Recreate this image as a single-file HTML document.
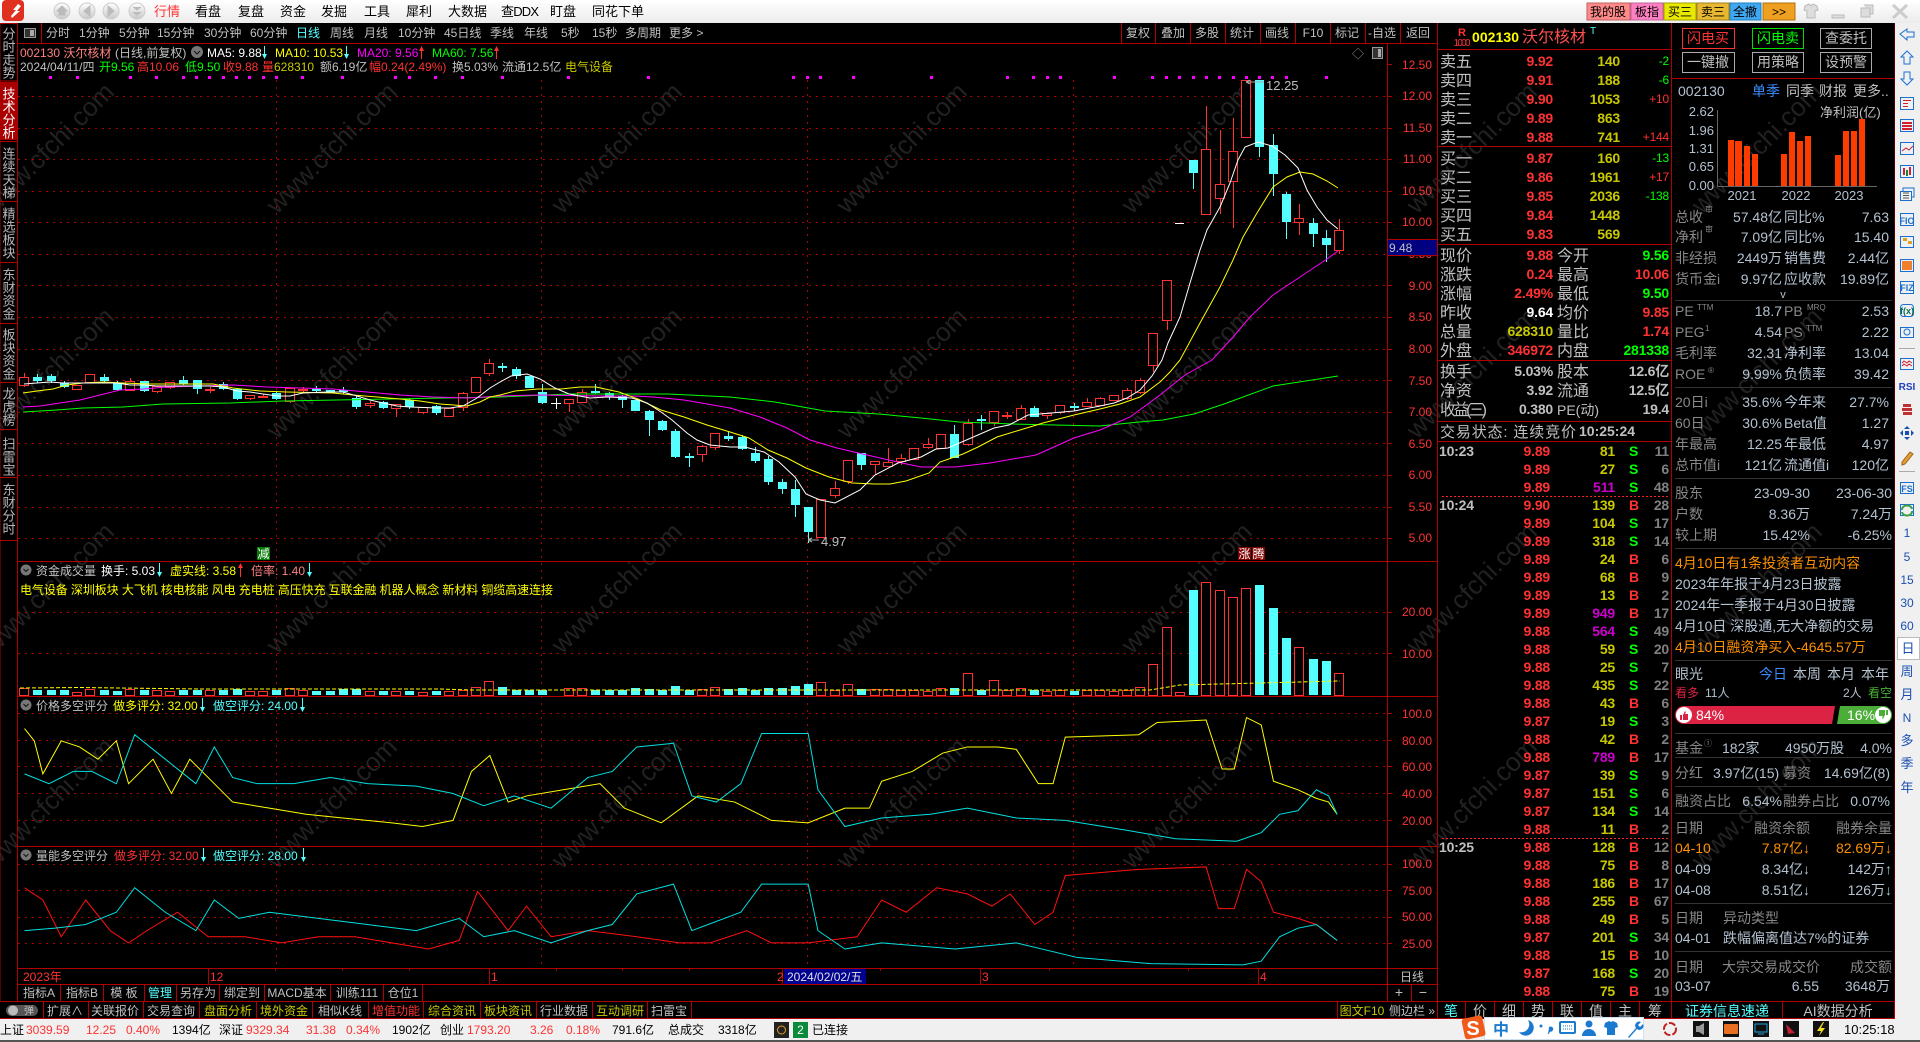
<!DOCTYPE html>
<html><head><meta charset="utf-8"><title>沃尔核材</title>
<style>
html,body{margin:0;padding:0;background:#000;width:1920px;height:1042px;overflow:hidden}
svg{display:block;position:absolute;left:0;top:0}
text{font-family:"Liberation Sans","Noto Sans CJK SC",sans-serif;font-size:12px;fill:#c0c0c0;white-space:pre}
.e{text-anchor:end}.m{text-anchor:middle}
.r{fill:#ff3232}.y{fill:#ffff00}.o{fill:#c8c800}.c{fill:#55ffff}.g{fill:#00ff00}.w{fill:#fff}.k{fill:#000}.p{fill:#ff00ff}.q{fill:#ff8080}.n{fill:#ff9000}
.b{fill:#3c8cff}.d{fill:#888}.v{fill:#b4c2d0}.u{fill:#cc00cc}.a{fill:#808080}
.f13{font-size:13px}.f14{font-size:14px}.f15{font-size:15px}.f16{font-size:16px}
.bd{font-weight:700}
.t text{font-size:14px;font-weight:700;letter-spacing:-.2px}
.z text{font-size:14px}
.wm text{font-size:26px;fill:#212121}
.vt{writing-mode:vertical-rl;font-size:13px;fill:#b8b8b8}
</style></head><body>
<svg width="1920" height="1042" viewBox="0 0 1920 1042" xmlns="http://www.w3.org/2000/svg">
<defs><linearGradient id="tb" x1="0" y1="0" x2="0" y2="1"><stop offset="0" stop-color="#fff"/><stop offset="1" stop-color="#ececec"/></linearGradient>
<linearGradient id="cb" x1="0" y1="0" x2="0" y2="1"><stop offset="0" stop-color="#fff"/><stop offset="1" stop-color="#c8c8c8"/></linearGradient></defs>
<rect width="1920" height="1042" fill="#000"/>

<!-- watermark -->
<g class="wm">
<text transform="translate(-6 215) rotate(-45)">www.cfchi.com</text><text transform="translate(277 215) rotate(-45)">www.cfchi.com</text><text transform="translate(562 215) rotate(-45)">www.cfchi.com</text><text transform="translate(847 215) rotate(-45)">www.cfchi.com</text><text transform="translate(1132 215) rotate(-45)">www.cfchi.com</text><text transform="translate(1417 215) rotate(-45)">www.cfchi.com</text><text transform="translate(1702 215) rotate(-45)">www.cfchi.com</text>
<text transform="translate(-6 440) rotate(-45)">www.cfchi.com</text><text transform="translate(277 440) rotate(-45)">www.cfchi.com</text><text transform="translate(562 440) rotate(-45)">www.cfchi.com</text><text transform="translate(847 440) rotate(-45)">www.cfchi.com</text><text transform="translate(1132 440) rotate(-45)">www.cfchi.com</text><text transform="translate(1417 440) rotate(-45)">www.cfchi.com</text><text transform="translate(1702 440) rotate(-45)">www.cfchi.com</text>
<text transform="translate(-6 655) rotate(-45)">www.cfchi.com</text><text transform="translate(277 655) rotate(-45)">www.cfchi.com</text><text transform="translate(562 655) rotate(-45)">www.cfchi.com</text><text transform="translate(847 655) rotate(-45)">www.cfchi.com</text><text transform="translate(1132 655) rotate(-45)">www.cfchi.com</text><text transform="translate(1417 655) rotate(-45)">www.cfchi.com</text><text transform="translate(1702 655) rotate(-45)">www.cfchi.com</text>
<text transform="translate(-6 870) rotate(-45)">www.cfchi.com</text><text transform="translate(277 870) rotate(-45)">www.cfchi.com</text><text transform="translate(562 870) rotate(-45)">www.cfchi.com</text><text transform="translate(847 870) rotate(-45)">www.cfchi.com</text><text transform="translate(1132 870) rotate(-45)">www.cfchi.com</text><text transform="translate(1417 870) rotate(-45)">www.cfchi.com</text><text transform="translate(1702 870) rotate(-45)">www.cfchi.com</text>
</g>

<!-- grid -->
<path d="M18 96.5H1387M18 128.5H1387M18 159.5H1387M18 191.5H1387M18 222.5H1387M18 254.5H1387M18 285.5H1387M18 317.5H1387M18 349.5H1387M18 380.5H1387M18 412.5H1387M18 443.5H1387M18 475.5H1387M18 507.5H1387M18 538.5H1387M18 612.5H1387M18 653.5H1387M18 713.5H1387M18 740.5H1387M18 766.5H1387M18 793.5H1387M18 820.5H1387M18 864.5H1387M18 890.5H1387M18 917.5H1387M18 943.5H1387M276.5 80V968M541.5 80V968M807.5 80V968M1073.5 80V968" stroke="#b00000" stroke-width="1" stroke-dasharray="2 5" fill="none"/>

<!-- magenta markers -->
<path d="M49 76h3v3h-3zM76 76h3v3h-3zM129 76h3v3h-3zM155 76h3v3h-3zM182 76h3v3h-3zM195 76h3v3h-3zM208 76h3v3h-3zM222 76h3v3h-3zM235 76h3v3h-3zM248 76h3v3h-3zM262 76h3v3h-3zM275 76h3v3h-3zM301 76h3v3h-3zM341 76h3v3h-3zM394 76h3v3h-3zM408 76h3v3h-3zM434 76h3v3h-3zM461 76h3v3h-3zM501 76h3v3h-3zM567 76h3v3h-3zM647 76h3v3h-3zM792 76h3v3h-3zM806 76h3v3h-3zM819 76h3v3h-3zM852 76h3v3h-3zM930 76h3v3h-3zM1006 76h3v3h-3zM1032 76h3v3h-3zM1046 76h3v3h-3zM1059 76h3v3h-3zM1113 76h3v3h-3zM1151 76h3v3h-3zM1165 76h3v3h-3zM1178 76h3v3h-3zM1192 76h3v3h-3zM1205 76h3v3h-3zM1218 76h3v3h-3zM1232 76h3v3h-3zM1245 76h3v3h-3zM1258 76h3v3h-3zM1271 76h3v3h-3zM1285 76h3v3h-3zM1325 76h3v3h-3z" fill="#ff00ff"/>

<!-- candles: cyan -->
<path d="M37.5 374V383M51.5 374V383M64.5 381V388M104.5 374V382M117.5 381V391M144.5 381V392M183.5 376V385M197.5 380V394M223.5 382V390M237.5 388V400M276.5 391V400M316.5 386V392M343.5 387V394M356.5 396V409M383.5 401V409M409.5 399V409M436.5 405V415M502.5 363V372M516.5 367V379M542.5 384V404M595.5 384V394M609.5 392V400M622.5 395V408M649.5 410V436M662.5 420V431M675.5 429V458M689.5 453V467M728.5 431V441M742.5 435V450M755.5 447V463M768.5 456V485M782.5 479V494M795.5 480V517M808.5 507V543M861.5 453V470M954.5 425V458M981.5 415V430M1034.5 406V417M1074.5 403V411M1193.5 160V189M1259.5 80V157M1273.5 134V196M1286.5 192V239M1313.5 218V247M1326.5 230V262" stroke="#55ffff" fill="none"/>
<path d="M33 377h9v4h-9zM47 376h9v5h-9zM60 383h9v4h-9zM100 377h9v4h-9zM113 383h9v7h-9zM140 381h9v10h-9zM179 380h9v4h-9zM193 380h9v9h-9zM219 384h9v5h-9zM233 389h9v10h-9zM272 393h9v6h-9zM312 389h9v2h-9zM326 390h9v3h-9zM339 390h9v2h-9zM352 398h9v9h-9zM379 402h9v6h-9zM405 400h9v7h-9zM432 406h9v7h-9zM498 366h9v2h-9zM512 369h9v7h-9zM525 376h9v12h-9zM538 392h9v11h-9zM591 391h9v2h-9zM605 393h9v4h-9zM618 396h9v4h-9zM631 400h9v11h-9zM645 411h9v9h-9zM658 421h9v9h-9zM671 431h9v26h-9zM685 456h9v2h-9zM724 436h9v3h-9zM738 437h9v12h-9zM751 453h9v8h-9zM764 459h9v23h-9zM778 482h9v7h-9zM791 489h9v16h-9zM804 507h9v25h-9zM857 453h9v12h-9zM950 434h9v24h-9zM977 419h9v2h-9zM1030 408h9v9h-9zM1070 406h9v2h-9zM1189 160h9v13h-9zM1255 80h9v67h-9zM1269 145h9v29h-9zM1282 194h9v28h-9zM1309 223h9v11h-9zM1322 238h9v7h-9z" fill="#55ffff"/>
<path d="M551 403.5h10M556.5 398V409M1175 223.5h9" stroke="#fff" fill="none"/>
<!-- candles: red -->
<path d="M24.5 373V387M130.5 378V391M157.5 391V393M170.5 387V389M210.5 387V393M250.5 398V400M263.5 394V398M290.5 401V403M303.5 387V392M370.5 401V408M396.5 408V417M423.5 412V414M463.5 392V411M476.5 392V393M489.5 359V376M569.5 403V412M582.5 389V403M702.5 445V462M715.5 447V450M835.5 481V498M848.5 481V484M875.5 464V475M888.5 448V466M901.5 454V465M914.5 459V460M928.5 438V449M968.5 419V446M994.5 422V426M1007.5 412V419M1021.5 405V420M1047.5 415V419M1060.5 412V414M1087.5 398V407M1100.5 397V405M1127.5 388V400M1140.5 378V394M1153.5 365V372M1167.5 320V330M1206.5 106V214M1220.5 130V214M1233.5 118V228M1299.5 204V235M1339.5 219V254" stroke="#ff3232" fill="none"/>
<path d="M19.5 377.5h9v8h-9zM72.5 385.5h9v4h-9zM85.5 374.5h9v8h-9zM125.5 381.5h9v9h-9zM152.5 386.5h9v5h-9zM165.5 382.5h9v5h-9zM205.5 389.5h9v1h-9zM245.5 395.5h9v3h-9zM258.5 396.5h9v1h-9zM285.5 388.5h9v13h-9zM298.5 389.5h9v1h-9zM365.5 403.5h9v2h-9zM391.5 404.5h9v4h-9zM418.5 407.5h9v5h-9zM444.5 408.5h9v8h-9zM458.5 393.5h9v14h-9zM471.5 377.5h9v15h-9zM484.5 363.5h9v10h-9zM564.5 399.5h9v4h-9zM577.5 392.5h9v10h-9zM697.5 446.5h9v8h-9zM710.5 433.5h9v14h-9zM816.5 499.5h9v38h-9zM830.5 488.5h9v7h-9zM843.5 460.5h9v21h-9zM870.5 461.5h9v3h-9zM883.5 462.5h9v4h-9zM896.5 458.5h9v3h-9zM909.5 448.5h9v11h-9zM923.5 444.5h9v3h-9zM936.5 434.5h9v14h-9zM963.5 423.5h9v21h-9zM989.5 411.5h9v11h-9zM1002.5 415.5h9v1h-9zM1016.5 408.5h9v11h-9zM1042.5 413.5h9v2h-9zM1055.5 405.5h9v7h-9zM1082.5 402.5h9v4h-9zM1095.5 398.5h9v7h-9zM1109.5 395.5h9v5h-9zM1122.5 390.5h9v8h-9zM1135.5 380.5h9v12h-9zM1148.5 333.5h9v32h-9zM1162.5 280.5h9v40h-9zM1201.5 149.5h9v65h-9zM1215.5 184.5h9v14h-9zM1228.5 151.5h9v30h-9zM1241.5 80.5h9v57h-9zM1294.5 218.5h9v4h-9zM1334.5 230.5h9v20h-9z" stroke="#ff3232" fill="#000"/>

<!-- MAs -->
<polyline fill="none" stroke="#00ff00" points="23,412 57,410 83,408 123,407 163,404 230,403 283,401 337,400 390,399 500,397 569,394 615,394 668,394 730,397 775,402 825,411 879,414 921,418 959,422 1013,424 1100,426 1139,422 1163,420 1194,414 1224,404 1273,386 1338,376"/>
<polyline fill="none" stroke="#ff00ff" points="23,407 40,406 60,403 80,400 100,395 120,390 143,389 167,387 200,386 233,385 267,387 300,388 333,389 367,392 400,395 433,397 467,398 500,396 538,395 596,396 634,396 653,397 684,400 730,408 760,417 787,428 810,440 837,448 867,455 902,463 921,467 955,467 990,463 1036,455 1074,438 1100,430 1130,417 1160,395 1185,375 1212,360 1233,337 1250,317 1273,295 1300,277 1327,259 1338,251"/>
<polyline fill="none" stroke="#ffff00" points="23,393 37,391 53,389 67,385 83,383 103,382 123,383 147,384 167,384 213,384 233,388 260,391 287,392 333,393 353,395 377,397 400,399 420,401 440,404 467,406 480,402 490,397 500,395 515,391 538,389 561,389 580,387 596,387 619,392 638,399 661,410 684,417 707,425 730,432 749,438 768,450 787,458 806,468 829,477 852,483 875,484 890,484 906,481 929,473 940,462 963,454 978,447 997,437 1020,430 1043,423 1074,415 1100,409 1120,404 1140,397 1160,382 1170,372 1180,360 1200,323 1220,287 1233,260 1243,237 1257,213 1273,187 1287,177 1300,172 1313,174 1327,181 1338,188"/>
<polyline fill="none" stroke="#fff" points="24,384 37,383 50,382 63,383 77,383 103,383 117,383 130,385 143,385 157,386 210,386 223,387 237,391 250,392 263,394 277,396 290,396 303,393 330,392 343,392 357,396 370,400 383,403 397,406 410,407 437,408 450,408 463,406 477,398 490,388 500,382 511,376 527,374 540,379 555,388 569,394 590,398 607,397 632,398 647,403 661,412 672,420 687,433 697,440 710,445 730,447 745,447 764,452 779,462 795,477 806,494 820,500 835,503 860,490 875,475 898,463 921,457 936,449 948,448 971,438 994,428 1009,425 1028,415 1051,413 1074,411 1100,406 1114,403 1127,398 1140,390 1152,376 1162,360 1168,343 1180,317 1190,283 1200,250 1207,230 1220,207 1230,183 1238,160 1245,147 1258,142 1272,146 1285,155 1298,168 1307,190 1317,207 1327,220 1338,229"/>

<!-- high/low labels -->
<path d="M1246 82l4-2M1246 82l4 2M1246 82H1264" stroke="#aaa" fill="none"/><text x="1266" y="90" class="f13">12.25</text>
<path d="M808 540h11M808 540l4-2M808 540l4 2" stroke="#aaa" fill="none"/><text x="821" y="546" class="f13">4.97</text>

<!-- vol bars -->
<path d="M33 690h9V695h-9zM47 690h9V695h-9zM60 690h9V695h-9zM100 690h9V695h-9zM113 691h9V695h-9zM140 690h9V695h-9zM179 690h9V695h-9zM193 690h9V695h-9zM219 690h9V695h-9zM233 689h9V695h-9zM272 690h9V695h-9zM312 691h9V695h-9zM326 691h9V695h-9zM339 689h9V695h-9zM352 689h9V695h-9zM379 691h9V695h-9zM405 691h9V695h-9zM432 691h9V695h-9zM498 687h9V695h-9zM512 690h9V695h-9zM525 690h9V695h-9zM538 690h9V695h-9zM591 690h9V695h-9zM605 690h9V695h-9zM618 690h9V695h-9zM631 688h9V695h-9zM645 689h9V695h-9zM658 690h9V695h-9zM671 686h9V695h-9zM685 690h9V695h-9zM724 689h9V695h-9zM738 688h9V695h-9zM751 690h9V695h-9zM764 688h9V695h-9zM778 688h9V695h-9zM791 686h9V695h-9zM804 684h9V695h-9zM857 689h9V695h-9zM950 688h9V695h-9zM977 690h9V695h-9zM1030 690h9V695h-9zM1070 691h9V695h-9zM1189 590h9V695h-9zM1255 585h9V695h-9zM1269 608h9V695h-9zM1282 638h9V695h-9zM1309 659h9V695h-9zM1322 661h9V695h-9z" fill="#55ffff"/>
<path d="M19.5 688.5h9v7h-9zM72.5 692.5h9v3h-9zM85.5 689.5h9v6h-9zM125.5 689.5h9v6h-9zM152.5 690.5h9v5h-9zM165.5 691.5h9v4h-9zM205.5 690.5h9v5h-9zM245.5 691.5h9v4h-9zM258.5 691.5h9v4h-9zM285.5 688.5h9v7h-9zM298.5 690.5h9v5h-9zM365.5 691.5h9v4h-9zM391.5 691.5h9v4h-9zM418.5 692.5h9v3h-9zM444.5 691.5h9v4h-9zM458.5 690.5h9v5h-9zM471.5 687.5h9v8h-9zM484.5 681.5h9v14h-9zM564.5 688.5h9v7h-9zM577.5 688.5h9v7h-9zM697.5 689.5h9v6h-9zM710.5 687.5h9v8h-9zM816.5 682.5h9v13h-9zM830.5 690.5h9v5h-9zM843.5 684.5h9v11h-9zM870.5 689.5h9v6h-9zM883.5 689.5h9v6h-9zM896.5 690.5h9v5h-9zM909.5 690.5h9v5h-9zM923.5 691.5h9v4h-9zM936.5 688.5h9v7h-9zM963.5 673.5h9v22h-9zM989.5 680.5h9v15h-9zM1002.5 690.5h9v5h-9zM1016.5 688.5h9v7h-9zM1042.5 691.5h9v4h-9zM1055.5 690.5h9v5h-9zM1082.5 690.5h9v5h-9zM1095.5 690.5h9v5h-9zM1109.5 691.5h9v4h-9zM1122.5 690.5h9v5h-9zM1135.5 687.5h9v8h-9zM1148.5 664.5h9v31h-9zM1175.5 692.5h9v3h-9zM1162.5 627.5h9v68h-9zM1201.5 582.5h9v113h-9zM1215.5 590.5h9v105h-9zM1228.5 597.5h9v98h-9zM1241.5 588.5h9v107h-9zM1294.5 647.5h9v48h-9zM1334.5 673.5h9v22h-9z" stroke="#ff3232" fill="#000"/>
<polyline fill="none" stroke="#ffff00" stroke-dasharray="4 2" points="20,688 80,687.5 200,689 440,689 470,690 1000,690 1150,690 1180,685 1340,681"/>

<!-- score lines -->
<g transform="scale(1.2245)" fill="none">
<polyline vector-effect="non-scaling-stroke" stroke="#ffff00" points="20,595 28,605 35,632 50,605 65,610 80,620 95,605 105,640 125,620 140,648 155,620 175,640 190,655 220,660 250,665 280,668 320,672 345,675 370,670 385,630 400,617 415,655 430,650 460,645 490,640 510,660 540,672 570,650 600,655 630,670 660,672 690,660 710,660 720,638 745,630 770,615 790,610 815,610 830,612 848,640 860,640 870,602 930,600 945,590 985,588 998,628 1008,628 1018,586 1030,592 1040,638 1060,645 1075,652 1085,655 1092,665"/>
<polyline vector-effect="non-scaling-stroke" stroke="#00e0e0" points="20,632 40,640 60,630 75,630 95,640 110,600 135,620 160,640 175,610 190,635 210,640 240,640 270,635 300,640 340,642 370,648 395,658 420,650 450,660 480,635 500,630 520,610 550,607 565,650 585,655 605,640 622,599 660,599 668,645 690,675 720,668 760,665 790,660 830,668 870,670 920,678 960,685 1010,687 1030,680 1045,665 1060,662 1075,645 1085,650 1092,665"/>
<polyline vector-effect="non-scaling-stroke" stroke="#ff1010" points="20,725 35,735 50,765 70,735 90,760 105,770 120,760 145,745 170,765 200,765 230,770 260,765 290,765 320,770 350,775 375,768 390,728 415,760 430,740 450,765 480,760 520,765 555,770 580,770 610,760 630,770 660,770 700,765 720,735 740,745 765,725 790,730 810,740 825,730 845,755 860,745 870,715 930,710 985,708 995,742 1008,742 1018,710 1030,720 1040,745 1060,750 1075,755 1092,768"/>
<polyline vector-effect="non-scaling-stroke" stroke="#00e0e0" points="20,760 45,758 70,755 95,745 110,725 135,745 160,760 175,735 195,750 220,745 260,750 300,755 340,760 375,750 395,765 420,760 450,770 480,760 500,755 520,730 550,722 565,760 605,745 622,722 660,722 668,760 690,775 720,770 780,775 830,770 880,782 940,787 1015,788 1030,785 1045,765 1060,758 1075,755 1092,768"/>
</g>

<!-- structure lines -->
<path d="M18 43.5H1437M18 561.5H1437M18 696.5H1437M18 846.5H1437M18 968.5H1437M18 984.5H1437M0 1001.5H1895M0 1018.5H1895M17.5 23V1001M1387.5 43V1001M1437.5 23V1019M1671.5 23V1019M1895 23V1019M41.5 23V43M1121.5 23V43M1155.5 23V43M1190.5 23V43M1225.5 23V43M1260.5 23V43M1295.5 23V43M1330.5 23V43M1365.5 23V43M1400.5 23V43M1411.5 984V1001M60.5 984V1001M103.5 984V1001M144.5 984V1001M176.5 984V1001M219.5 984V1001M264.5 984V1001M330.5 984V1001M383.5 984V1001M422.5 984V1001M43.5 1001V1019M88.5 1001V1019M143.5 1001V1019M199.5 1001V1019M256.5 1001V1019M312.5 1001V1019M368.5 1001V1019M423.5 1001V1019M480.5 1001V1019M536.5 1001V1019M592.5 1001V1019M647.5 1001V1019M691.5 1001V1019M1337.5 1001V1019M208.5 968V984M489.5 968V984M782.5 968V984M980.5 968V984M1258.5 968V984M1438 49.5H1671M1438 146.5H1671M1438 244.5H1671M1438 360.5H1671M1438 421.5H1671M1438 441.5H1671M1672 78.5H1895M1465.5 1001V1019M1494.5 1001V1019M1523.5 1001V1019M1552.5 1001V1019M1581.5 1001V1019M1610.5 1001V1019M1639.5 1001V1019M1782.5 1001V1019M1894.5 1001V1019M1387 64.5h5M1387 96.5h5M1387 128.5h5M1387 159.5h5M1387 191.5h5M1387 222.5h5M1387 254.5h5M1387 285.5h5M1387 317.5h5M1387 349.5h5M1387 380.5h5M1387 412.5h5M1387 443.5h5M1387 475.5h5M1387 507.5h5M1387 538.5h5M1387 612.5h5M1387 653.5h5M1387 713.5h5M1387 740.5h5M1387 766.5h5M1387 793.5h5M1387 820.5h5M1387 864.5h5M1387 890.5h5M1387 917.5h5M1387 943.5h5M275.5 968v3M342.5 968v3M409.5 968v3M556.5 968v3M622.5 968v3M689.5 968v3M880.5 968v3M1049.5 968v3M1188.5 968v3" stroke="#b00000" fill="none"/>
<path d="M1442 496.5H1669M1442 838.5H1669" stroke="#ff2020" stroke-dasharray="2 2" fill="none"/>
<path d="M1675 300.5H1892M1675 387.5H1892M1675 478.5H1892M1675 548.5H1892M1675 660.5H1892M1675 733.5H1892M1675 757.5H1892M1675 786.5H1892M1675 813.5H1892M1675 903.5H1892M1675 951.5H1892" stroke="#333" fill="none"/>

<!-- title bar -->
<rect width="1920" height="23" fill="url(#tb)"/>
<rect x="2" y="0" width="22" height="21" rx="4" fill="#e03020"/>
<path d="M18 4l-5 6h3l-5 6 1 2 8-7h-3l4-5z" fill="#fff"/>
<g fill="url(#cb)" stroke="#ccc"><circle cx="62" cy="11" r="8"/><circle cx="87" cy="11" r="8"/><circle cx="111" cy="11" r="8"/><circle cx="137" cy="11" r="8"/></g>
<path d="M57 11l5-5 5 5h-2v4h-6v-4zM90 6v10l-6-5zM108 6v10l6-5zM133 7l4 3 4-3M133 12l4 3 4-3" fill="#bbb" stroke="#bbb"/>
<g class="k"><text x="154" y="16" class="r f13">行情</text><text x="195" y="16" class="k f13">看盘</text><text x="238" y="16" class="k f13">复盘</text><text x="280" y="16" class="k f13">资金</text><text x="321" y="16" class="k f13">发掘</text><text x="364" y="16" class="k f13">工具</text><text x="406" y="16" class="k f13">犀利</text><text x="448" y="16" class="k f13">大数据</text><text x="501" y="16" class="k f13" textLength="38">查DDX</text><text x="550" y="16" class="k f13">盯盘</text><text x="592" y="16" class="k f13">同花下单</text></g>
<rect x="1587" y="3" width="43" height="17" fill="#ff8a8a" stroke="#c06060"/><rect x="1631" y="3" width="32" height="17" fill="#ff80c0" stroke="#c060a0"/><rect x="1664" y="3" width="32" height="17" fill="#e8e800" stroke="#a0a000"/><rect x="1697" y="3" width="32" height="17" fill="#e8b830" stroke="#a08020"/><rect x="1730" y="3" width="31" height="17" fill="#40a8f0" stroke="#2080c0"/><rect x="1763" y="3" width="32" height="17" fill="#f0a020" stroke="#b07010"/>
<text x="1608" y="16" class="k m">我的股</text><text x="1647" y="16" class="k m">板指</text><text x="1680" y="16" class="k m">买三</text><text x="1713" y="16" class="k m">卖三</text><text x="1745" y="16" class="k m">全撤</text><text x="1779" y="16" class="k m">&gt;&gt;</text>
<path d="M1805 6l4-2 2 2 2-2 4 2 1 4-3 1v7h-8v-7l-3-1z" fill="#ddd" stroke="#bbb"/>
<path d="M1832 15h12v3h-12zM1861 8h9v9h-9zM1864 5h9v9h-3" fill="#ddd" stroke="#bbb"/>
<path d="M1893 5l14 13M1907 5l-14 13" stroke="#ccc" stroke-width="3" fill="none"/>

<!-- left sidebar -->
<rect x="0" y="82" width="17" height="58" fill="#a80000"/>
<path d="M0 23.5H18M0 81H18M0 141.5H17M0 201.5H17M0 262.5H17M0 323.5H17M0 382.5H17M0 429.5H17M0 477.5H17M0 540.5H17M0 1001V23" stroke="#b00000" fill="none"/>
<text x="8" y="27" class="vt">分时走势</text><text x="8" y="87" class="vt" style="fill:#fff">技术分析</text><text x="8" y="147" class="vt">连续天梯</text><text x="8" y="207" class="vt">精选板块</text><text x="8" y="268" class="vt">东财资金</text><text x="8" y="328" class="vt">板块资金</text><text x="8" y="387" class="vt">龙虎榜</text><text x="8" y="437" class="vt">扫雷宝</text><text x="8" y="483" class="vt">东财分时</text>

<!-- toolbar -->
<rect x="24.5" y="28.5" width="11" height="9" fill="#333" stroke="#999"/><rect x="30" y="30" width="4" height="6" fill="#aaa"/>
<text x="46" y="37">分时</text><text x="79" y="37">1分钟</text><text x="119" y="37">5分钟</text><text x="157" y="37">15分钟</text><text x="204" y="37">30分钟</text><text x="250" y="37">60分钟</text><text x="296" y="37" class="c">日线</text><text x="330" y="37">周线</text><text x="364" y="37">月线</text><text x="398" y="37">10分钟</text><text x="444" y="37">45日线</text><text x="490" y="37">季线</text><text x="524" y="37">年线</text><text x="561" y="37">5秒</text><text x="592" y="37">15秒</text><text x="625" y="37">多周期</text><text x="669" y="37">更多 &gt;</text>
<text x="1138" y="37" class="m">复权</text><text x="1173" y="37" class="m">叠加</text><text x="1207" y="37" class="m">多股</text><text x="1242" y="37" class="m">统计</text><text x="1277" y="37" class="m">画线</text><text x="1313" y="37" class="m">F10</text><text x="1347" y="37" class="m">标记</text><text x="1382" y="37" class="m">-自选</text><text x="1418" y="37" class="m">返回</text>

<!-- chart header -->
<text x="20" y="57" class="q">002130 沃尔核材</text><text x="115" y="57">(日线,前复权)</text>
<circle cx="197" cy="52" r="6" fill="#777"/><path d="M194 51l3 3 3-3" stroke="#111" fill="none"/>
<text x="207" y="57" class="w">MA5: 9.88</text><text x="275" y="57" class="y">MA10: 10.53</text><text x="357" y="57" class="p">MA20: 9.56</text><text x="432" y="57" class="g">MA60: 7.56</text>
<path d="M264.5 46V58M346.5 46V58" stroke="#55ffff" fill="none"/><path d="M262 54h5l-2.500 5zM344 54h5l-2.500 5z" fill="#55ffff"/>
<path d="M421.500 47V59M496.500 47V59" stroke="#ff3232" fill="none"/><path d="M419 51h5l-2.500-5zM494 51h5l-2.500-5z" fill="#ff3232"/>
<text x="20" y="71">2024/04/11/四</text><text x="99" y="71" class="g">开9.56</text><text x="137" y="71" class="r">高10.06</text><text x="185" y="71" class="g">低9.50</text><text x="223" y="71" class="r">收9.88</text><text x="262" y="71" class="r">量</text><text x="274" y="71" class="o">628310</text><text x="320" y="71">额6.19亿</text><text x="369" y="71" class="r">幅0.24(2.49%)</text><text x="452" y="71">换5.03%</text><text x="502" y="71">流通12.5亿</text><text x="565" y="71" class="o">电气设备</text>
<text x="1358" y="58" class="m" style="fill:#888">◇</text><rect x="1372.500" y="47.500" width="10" height="11" fill="#333" stroke="#999"/><rect x="1378" y="49" width="3" height="8" fill="#aaa"/>

<!-- price axis -->
<g><text x="1432" y="69" class="r e">12.50</text><text x="1432" y="100" class="r e">12.00</text><text x="1432" y="132" class="r e">11.50</text><text x="1432" y="163" class="r e">11.00</text><text x="1432" y="195" class="r e">10.50</text><text x="1432" y="226" class="r e">10.00</text><text x="1432" y="258" class="r e">9.50</text><text x="1432" y="290" class="r e">9.00</text><text x="1432" y="321" class="r e">8.50</text><text x="1432" y="353" class="r e">8.00</text><text x="1432" y="385" class="r e">7.50</text><text x="1432" y="416" class="r e">7.00</text><text x="1432" y="448" class="r e">6.50</text><text x="1432" y="479" class="r e">6.00</text><text x="1432" y="511" class="r e">5.50</text><text x="1432" y="542" class="r e">5.00</text><text x="1432" y="616" class="r e">20.00</text><text x="1432" y="658" class="r e">10.00</text><text x="1432" y="718" class="r e">100.0</text><text x="1432" y="745" class="r e">80.00</text><text x="1432" y="771" class="r e">60.00</text><text x="1432" y="798" class="r e">40.00</text><text x="1432" y="825" class="r e">20.00</text><text x="1432" y="868" class="r e">100.0</text><text x="1432" y="895" class="r e">75.00</text><text x="1432" y="921" class="r e">50.00</text><text x="1432" y="948" class="r e">25.00</text></g>
<rect x="1387.500" y="239.500" width="50" height="16" fill="#000080" stroke="#b00000"/><text x="1389" y="252">9.48</text>

<!-- badges -->
<rect x="257" y="547" width="13" height="13" fill="#0a7a0a"/><text x="263.500" y="558" class="m w">减</text>
<rect x="1238" y="547" width="13" height="13" fill="#800000"/><rect x="1252" y="547" width="13" height="13" fill="#800000"/><text x="1244.500" y="558" class="m w">涨</text><text x="1258.500" y="558" class="m w">腾</text>

<!-- indicator headers -->
<circle cx="26" cy="570" r="5.500" fill="#777"/><path d="M23.500 569l2.500 2.500 2.500-2.500" stroke="#111" fill="none"/>
<text x="36" y="575">资金成交量</text><text x="101" y="575" class="w">换手: 5.03</text><text x="170" y="575" class="y">虚实线: 3.58</text><text x="251" y="575" class="q">倍率: 1.40</text>
<path d="M159.500 563V575M309.500 563V575" stroke="#55ffff"/><path d="M157 572h5l-2.500 5zM307 572h5l-2.500 5z" fill="#55ffff"/><path d="M240.500 565V577" stroke="#ff3232"/><path d="M238 568h5l-2.500-5z" fill="#ff3232"/>
<text x="20" y="594" class="y" textLength="533">电气设备 深圳板块 大飞机 核电核能 风电 充电桩 高压快充 互联金融 机器人概念 新材料 铜缆高速连接</text>
<circle cx="26" cy="705" r="5.500" fill="#777"/><path d="M23.500 704l2.500 2.500 2.500-2.500" stroke="#111" fill="none"/>
<text x="36" y="710">价格多空评分</text><text x="113" y="710" class="y">做多评分: 32.00</text><text x="213" y="710" class="c">做空评分: 24.00</text>
<path d="M202.500 698V710M302.500 698V710" stroke="#55ffff"/><path d="M200 707h5l-2.500 5zM300 707h5l-2.500 5z" fill="#55ffff"/>
<circle cx="26" cy="855" r="5.500" fill="#777"/><path d="M23.500 854l2.500 2.500 2.500-2.500" stroke="#111" fill="none"/>
<text x="36" y="860">量能多空评分</text><text x="114" y="860" class="r">做多评分: 32.00</text><text x="213" y="860" class="c">做空评分: 28.00</text>
<path d="M203.500 848V860M303.500 848V860" stroke="#55ffff"/><path d="M201 857h5l-2.500 5zM301 857h5l-2.500 5z" fill="#55ffff"/>

<!-- date axis -->
<text x="23" y="981" class="r">2023年</text><text x="210" y="981" class="r">12</text><text x="491" y="981" class="r">1</text><text x="777" y="981" class="r">2</text>
<rect x="784" y="969" width="82" height="15" fill="#000090"/><text x="787" y="981" style="fill:#e0e0e0">2024/02/02/五</text>
<text x="982" y="981" class="r">3</text><text x="1260" y="981" class="r">4</text><text x="1412" y="981" class="m">日线</text>
<text x="1399" y="997" class="m f14">+</text><text x="1423" y="997" class="m f14">−</text>

<!-- indicator tabs -->
<text x="39" y="997" class="m">指标A</text><text x="82" y="997" class="m">指标B</text><text x="124" y="997" class="m">模 板</text><text x="160" y="997" class="m c">管理</text><text x="198" y="997" class="m">另存为</text><text x="242" y="997" class="m">绑定到</text><text x="297" y="997" class="m">MACD基本</text><text x="357" y="997" class="m">训练111</text><text x="403" y="997" class="m">仓位1</text>
<rect x="6" y="1005" width="32" height="11" rx="5.500" fill="#555"/><circle cx="13" cy="1010.500" r="5" fill="#bbb"/><text x="29" y="1014" class="m" style="font-size:10px">弹</text>
<text x="65" y="1015" class="m">扩展∧</text><text x="115" y="1015" class="m">关联报价</text><text x="171" y="1015" class="m">交易查询</text><text x="228" y="1015" class="m o">盘面分析</text><text x="284" y="1015" class="m o">境外资金</text><text x="340" y="1015" class="m">相似K线</text><text x="396" y="1015" class="m r">增值功能</text><text x="452" y="1015" class="m o">综合资讯</text><text x="508" y="1015" class="m o">板块资讯</text><text x="564" y="1015" class="m">行业数据</text><text x="620" y="1015" class="m o">互动调研</text><text x="669" y="1015" class="m">扫雷宝</text>
<text x="1362" y="1015" class="m o">图文F10</text><text x="1412" y="1015" class="m">侧边栏 »</text>

<!-- quote panel -->
<text x="1462" y="36" class="r m bd" style="font-size:11px">R</text><text x="1462" y="46" class="r m" style="font-size:10px" textLength="17">1000</text>
<text x="1472" y="42" class="y bd f14" textLength="47">002130</text><text x="1522" y="42" class="r f16" style="fill:#ff5050">沃尔核材</text><text x="1590" y="34" class="c" style="font-size:10px">T</text>

<g><text x="1440" y="67" class="f16">卖五</text><text x="1440" y="86" class="f16">卖四</text><text x="1440" y="105" class="f16">卖三</text><text x="1440" y="124" class="f16">卖二</text><text x="1440" y="143" class="f16">卖一</text><text x="1440" y="164" class="f16">买一</text><text x="1440" y="183" class="f16">买二</text><text x="1440" y="202" class="f16">买三</text><text x="1440" y="221" class="f16">买四</text><text x="1440" y="240" class="f16">买五</text>
<text x="1440" y="261" class="f16">现价</text><text x="1440" y="280" class="f16">涨跌</text><text x="1440" y="299" class="f16">涨幅</text><text x="1440" y="318" class="f16">昨收</text><text x="1440" y="337" class="f16">总量</text><text x="1440" y="356" class="f16">外盘</text><text x="1440" y="377" class="f16">换手</text><text x="1440" y="396" class="f16">净资</text><text x="1440" y="415" class="f16" textLength="47">收益(三)</text>
<text x="1557" y="261" class="f16">今开</text><text x="1557" y="280" class="f16">最高</text><text x="1557" y="299" class="f16">最低</text><text x="1557" y="318" class="f16">均价</text><text x="1557" y="337" class="f16">量比</text><text x="1557" y="356" class="f16">内盘</text><text x="1557" y="377" class="f16">股本</text><text x="1557" y="396" class="f16">流通</text><text x="1557" y="415" class="f14">PE(动)</text>
<text x="1440" y="437" class="f15" textLength="136">交易状态: 连续竞价</text><text x="1579" y="436" class="f14 bd">10:25:24</text></g>

<g class="t">
<g><text x="1553" y="66" class="e r">9.92</text><text x="1620" y="66" class="e o">140</text><text x="1669" y="65" class="e g" style="font-size:12px;font-weight:400">-2</text></g>
<g><text x="1553" y="85" class="e r">9.91</text><text x="1620" y="85" class="e o">188</text><text x="1669" y="84" class="e g" style="font-size:12px;font-weight:400">-6</text></g>
<g><text x="1553" y="104" class="e r">9.90</text><text x="1620" y="104" class="e o">1053</text><text x="1669" y="103" class="e r" style="font-size:12px;font-weight:400">+10</text></g>
<g><text x="1553" y="123" class="e r">9.89</text><text x="1620" y="123" class="e o">863</text></g>
<g><text x="1553" y="142" class="e r">9.88</text><text x="1620" y="142" class="e o">741</text><text x="1669" y="141" class="e r" style="font-size:12px;font-weight:400">+144</text></g>
<g><text x="1553" y="163" class="e r">9.87</text><text x="1620" y="163" class="e o">160</text><text x="1669" y="162" class="e g" style="font-size:12px;font-weight:400">-13</text></g>
<g><text x="1553" y="182" class="e r">9.86</text><text x="1620" y="182" class="e o">1961</text><text x="1669" y="181" class="e r" style="font-size:12px;font-weight:400">+17</text></g>
<g><text x="1553" y="201" class="e r">9.85</text><text x="1620" y="201" class="e o">2036</text><text x="1669" y="200" class="e g" style="font-size:12px;font-weight:400">-138</text></g>
<g><text x="1553" y="220" class="e r">9.84</text><text x="1620" y="220" class="e o">1448</text></g>
<g><text x="1553" y="239" class="e r">9.83</text><text x="1620" y="239" class="e o">569</text></g>
<text x="1553" y="260" class="e r">9.88</text><text x="1669" y="260" class="e g">9.56</text>
<text x="1553" y="279" class="e r">0.24</text><text x="1669" y="279" class="e r">10.06</text>
<text x="1553" y="298" class="e r">2.49%</text><text x="1669" y="298" class="e g">9.50</text>
<text x="1553" y="317" class="e w">9.64</text><text x="1669" y="317" class="e r">9.85</text>
<text x="1553" y="336" class="e o">628310</text><text x="1669" y="336" class="e r">1.74</text>
<text x="1553" y="355" class="e r">346972</text><text x="1669" y="355" class="e g">281338</text>
<text x="1553" y="376" class="e">5.03%</text><text x="1669" y="376" class="e">12.6亿</text>
<text x="1553" y="395" class="e">3.92</text><text x="1669" y="395" class="e">12.5亿</text>
<text x="1553" y="414" class="e">0.380</text><text x="1669" y="414" class="e">19.4</text>
</g>

<!-- ticks -->
<g class="t">
<g transform="translate(0 456)"><text x="1439">10:23</text><text x="1550" class="e r">9.89</text><text x="1615" class="e o">81</text><text x="1629" class="g">S</text><text x="1669" class="e a">11</text></g>
<g transform="translate(0 474)"><text x="1550" class="e r">9.89</text><text x="1615" class="e o">27</text><text x="1629" class="g">S</text><text x="1669" class="e a">6</text></g>
<g transform="translate(0 492)"><text x="1550" class="e r">9.89</text><text x="1615" class="e u">511</text><text x="1629" class="g">S</text><text x="1669" class="e a">48</text></g>
<g transform="translate(0 510)"><text x="1439">10:24</text><text x="1550" class="e r">9.90</text><text x="1615" class="e o">139</text><text x="1629" class="r">B</text><text x="1669" class="e a">28</text></g>
<g transform="translate(0 528)"><text x="1550" class="e r">9.89</text><text x="1615" class="e o">104</text><text x="1629" class="g">S</text><text x="1669" class="e a">17</text></g>
<g transform="translate(0 546)"><text x="1550" class="e r">9.89</text><text x="1615" class="e o">318</text><text x="1629" class="g">S</text><text x="1669" class="e a">14</text></g>
<g transform="translate(0 564)"><text x="1550" class="e r">9.89</text><text x="1615" class="e o">24</text><text x="1629" class="r">B</text><text x="1669" class="e a">6</text></g>
<g transform="translate(0 582)"><text x="1550" class="e r">9.89</text><text x="1615" class="e o">68</text><text x="1629" class="r">B</text><text x="1669" class="e a">9</text></g>
<g transform="translate(0 600)"><text x="1550" class="e r">9.89</text><text x="1615" class="e o">13</text><text x="1629" class="r">B</text><text x="1669" class="e a">2</text></g>
<g transform="translate(0 618)"><text x="1550" class="e r">9.89</text><text x="1615" class="e u">949</text><text x="1629" class="r">B</text><text x="1669" class="e a">17</text></g>
<g transform="translate(0 636)"><text x="1550" class="e r">9.88</text><text x="1615" class="e u">564</text><text x="1629" class="g">S</text><text x="1669" class="e a">49</text></g>
<g transform="translate(0 654)"><text x="1550" class="e r">9.88</text><text x="1615" class="e o">59</text><text x="1629" class="g">S</text><text x="1669" class="e a">20</text></g>
<g transform="translate(0 672)"><text x="1550" class="e r">9.88</text><text x="1615" class="e o">25</text><text x="1629" class="g">S</text><text x="1669" class="e a">7</text></g>
<g transform="translate(0 690)"><text x="1550" class="e r">9.88</text><text x="1615" class="e o">435</text><text x="1629" class="g">S</text><text x="1669" class="e a">22</text></g>
<g transform="translate(0 708)"><text x="1550" class="e r">9.88</text><text x="1615" class="e o">43</text><text x="1629" class="r">B</text><text x="1669" class="e a">6</text></g>
<g transform="translate(0 726)"><text x="1550" class="e r">9.87</text><text x="1615" class="e o">19</text><text x="1629" class="g">S</text><text x="1669" class="e a">3</text></g>
<g transform="translate(0 744)"><text x="1550" class="e r">9.88</text><text x="1615" class="e o">42</text><text x="1629" class="r">B</text><text x="1669" class="e a">2</text></g>
<g transform="translate(0 762)"><text x="1550" class="e r">9.88</text><text x="1615" class="e u">789</text><text x="1629" class="r">B</text><text x="1669" class="e a">17</text></g>
<g transform="translate(0 780)"><text x="1550" class="e r">9.87</text><text x="1615" class="e o">39</text><text x="1629" class="g">S</text><text x="1669" class="e a">9</text></g>
<g transform="translate(0 798)"><text x="1550" class="e r">9.87</text><text x="1615" class="e o">151</text><text x="1629" class="g">S</text><text x="1669" class="e a">6</text></g>
<g transform="translate(0 816)"><text x="1550" class="e r">9.87</text><text x="1615" class="e o">134</text><text x="1629" class="g">S</text><text x="1669" class="e a">14</text></g>
<g transform="translate(0 834)"><text x="1550" class="e r">9.88</text><text x="1615" class="e o">11</text><text x="1629" class="r">B</text><text x="1669" class="e a">2</text></g>
<g transform="translate(0 852)"><text x="1439">10:25</text><text x="1550" class="e r">9.88</text><text x="1615" class="e o">128</text><text x="1629" class="r">B</text><text x="1669" class="e a">12</text></g>
<g transform="translate(0 870)"><text x="1550" class="e r">9.88</text><text x="1615" class="e o">75</text><text x="1629" class="r">B</text><text x="1669" class="e a">8</text></g>
<g transform="translate(0 888)"><text x="1550" class="e r">9.88</text><text x="1615" class="e o">186</text><text x="1629" class="r">B</text><text x="1669" class="e a">17</text></g>
<g transform="translate(0 906)"><text x="1550" class="e r">9.88</text><text x="1615" class="e o">255</text><text x="1629" class="r">B</text><text x="1669" class="e a">67</text></g>
<g transform="translate(0 924)"><text x="1550" class="e r">9.88</text><text x="1615" class="e o">49</text><text x="1629" class="r">B</text><text x="1669" class="e a">5</text></g>
<g transform="translate(0 942)"><text x="1550" class="e r">9.87</text><text x="1615" class="e o">201</text><text x="1629" class="g">S</text><text x="1669" class="e a">34</text></g>
<g transform="translate(0 960)"><text x="1550" class="e r">9.88</text><text x="1615" class="e o">15</text><text x="1629" class="r">B</text><text x="1669" class="e a">10</text></g>
<g transform="translate(0 978)"><text x="1550" class="e r">9.87</text><text x="1615" class="e o">168</text><text x="1629" class="g">S</text><text x="1669" class="e a">20</text></g>
<g transform="translate(0 996)"><text x="1550" class="e r">9.88</text><text x="1615" class="e o">75</text><text x="1629" class="r">B</text><text x="1669" class="e a">19</text></g>
</g>

<!-- tabs under ticks -->
<text x="1451" y="1016" class="m c f14">笔</text><text x="1480" y="1016" class="m f14">价</text><text x="1509" y="1016" class="m f14">细</text><text x="1538" y="1016" class="m f14">势</text><text x="1567" y="1016" class="m f14">联</text><text x="1596" y="1016" class="m f14">值</text><text x="1625" y="1016" class="m f14">主</text><text x="1655" y="1016" class="m f14">筹</text>
<text x="1727" y="1016" class="m c f14">证券信息速递</text><text x="1838" y="1016" class="m f14">AI数据分析</text>

<!-- action buttons -->
<rect x="1682.500" y="28.500" width="52" height="20" fill="none" stroke="#ff3232"/><text x="1708" y="43" class="m r f14">闪电买</text>
<rect x="1752.500" y="28.500" width="51" height="20" fill="none" stroke="#00e000"/><text x="1778" y="43" class="m g f14">闪电卖</text>
<rect x="1820.500" y="28.500" width="51" height="20" fill="none" stroke="#aaa"/><text x="1846" y="43" class="m f14">查委托</text>
<rect x="1682.500" y="52.500" width="52" height="20" fill="none" stroke="#aaa"/><text x="1708" y="67" class="m f14">一键撤</text>
<rect x="1752.500" y="52.500" width="51" height="20" fill="none" stroke="#aaa"/><text x="1778" y="67" class="m f14">用策略</text>
<rect x="1820.500" y="52.500" width="51" height="20" fill="none" stroke="#aaa"/><text x="1846" y="67" class="m f14">设预警</text>

<!-- fundamentals -->
<text x="1678" y="96" class="v f14">002130</text><text x="1752" y="96" class="b f14">单季</text><text x="1786" y="96" class="f14">同季</text><text x="1819" y="96" class="f14">财报</text><text x="1853" y="96" class="f14">更多..</text>
<text x="1714" y="116" class="e v f13">2.62</text><text x="1714" y="135" class="e v f13">1.96</text><text x="1714" y="153" class="e v f13">1.31</text><text x="1714" y="171" class="e v f13">0.65</text><text x="1714" y="190" class="e v f13">0.00</text>
<text x="1820" y="117" class="f13">净利润(亿)</text>
<path d="M1717.500 110V186M1717 186.500H1877" stroke="#666" fill="none"/>
<path d="M1728 140h6v46h-6zM1735 141h7v45h-7zM1744 146h6v40h-6zM1752 154h6v32h-6zM1781 154h6v32h-6zM1789 132h6v54h-6zM1797 141h6v45h-6zM1805 136h6v50h-6zM1835 155h6v31h-6zM1843 131h6v55h-6zM1851 131h6v55h-6zM1859 119h6v67h-6z" fill="#ff3c00"/>
<text x="1742" y="200" class="m v f13">2021</text><text x="1796" y="200" class="m v f13">2022</text><text x="1849" y="200" class="m v f13">2023</text>

<g class="z">
<text x="1675" y="222" class="d">总收</text><text x="1705" y="212" class="d" style="font-size:8px">审</text><text x="1782" y="222" class="e v">57.48亿</text><text x="1784" y="222" class="v">同比%</text><text x="1889" y="222" class="e v">7.63</text>
<text x="1675" y="242" class="d">净利</text><text x="1705" y="232" class="d" style="font-size:8px">审</text><text x="1782" y="242" class="e v">7.09亿</text><text x="1784" y="242" class="v">同比%</text><text x="1889" y="242" class="e v">15.40</text>
<text x="1675" y="263" class="d">非经损</text><text x="1782" y="263" class="e v">2449万</text><text x="1784" y="263" class="v">销售费</text><text x="1889" y="263" class="e v">2.44亿</text>
<text x="1675" y="284" class="d">货币金i</text><text x="1782" y="284" class="e v">9.97亿</text><text x="1784" y="284" class="v">应收款</text><text x="1889" y="284" class="e v">19.89亿</text>
<text x="1783" y="298" class="m v" style="font-size:11px">v</text>
<text x="1675" y="316" class="d">PE</text><text x="1697" y="310" class="d" style="font-size:8px">TTM</text><text x="1782" y="316" class="e v">18.7</text><text x="1784" y="316" class="d">PB</text><text x="1807" y="310" class="d" style="font-size:8px">MRQ</text><text x="1889" y="316" class="e v">2.53</text>
<text x="1675" y="337" class="d">PEG</text><text x="1705" y="331" class="d" style="font-size:8px">1</text><text x="1782" y="337" class="e v">4.54</text><text x="1784" y="337" class="d">PS</text><text x="1806" y="331" class="d" style="font-size:8px">TTM</text><text x="1889" y="337" class="e v">2.22</text>
<text x="1675" y="358" class="d">毛利率</text><text x="1782" y="358" class="e v">32.31</text><text x="1784" y="358" class="v">净利率</text><text x="1889" y="358" class="e v">13.04</text>
<text x="1675" y="379" class="d">ROE</text><text x="1708" y="373" class="d" style="font-size:8px">®</text><text x="1782" y="379" class="e v">9.99%</text><text x="1784" y="379" class="v">负债率</text><text x="1889" y="379" class="e v">39.42</text>
<text x="1675" y="407" class="d">20日i</text><text x="1782" y="407" class="e v">35.6%</text><text x="1784" y="407" class="v">今年来</text><text x="1889" y="407" class="e v">27.7%</text>
<text x="1675" y="428" class="d">60日</text><text x="1782" y="428" class="e v">30.6%</text><text x="1784" y="428" class="v">Beta值</text><text x="1889" y="428" class="e v">1.27</text>
<text x="1675" y="449" class="d">年最高</text><text x="1782" y="449" class="e v">12.25</text><text x="1784" y="449" class="v">年最低</text><text x="1889" y="449" class="e v">4.97</text>
<text x="1675" y="470" class="d">总市值i</text><text x="1782" y="470" class="e v">121亿</text><text x="1784" y="470" class="v">流通值i</text><text x="1889" y="470" class="e v">120亿</text>
<text x="1675" y="498" class="d">股东</text><text x="1810" y="498" class="e v">23-09-30</text><text x="1892" y="498" class="e v">23-06-30</text>
<text x="1675" y="519" class="d">户数</text><text x="1810" y="519" class="e v">8.36万</text><text x="1892" y="519" class="e v">7.24万</text>
<text x="1675" y="540" class="d">较上期</text><text x="1810" y="540" class="e v">15.42%</text><text x="1892" y="540" class="e v">-6.25%</text>
<text x="1675" y="568" class="n">4月10日有1条投资者互动内容</text>
<text x="1675" y="589" class="v">2023年年报于4月23日披露</text>
<text x="1675" y="610" class="v">2024年一季报于4月30日披露</text>
<text x="1675" y="631" class="v">4月10日 深股通,无大净额的交易</text>
<text x="1675" y="652" class="n">4月10日融资净买入-4645.57万</text>
<text x="1675" y="679" class="v">眼光</text><text x="1759" y="679" class="b">今日</text><text x="1793" y="679" class="v">本周</text><text x="1827" y="679" class="v">本月</text><text x="1861" y="679" class="v">本年</text>
<text x="1675" y="697" style="fill:#dc2344;font-size:12px">看多</text><text x="1705" y="697" class="v" style="font-size:12px">11人</text><text x="1843" y="697" class="v" style="font-size:12px">2人</text><text x="1868" y="697" style="fill:#4cae38;font-size:12px">看空</text>
<text x="1675" y="753" class="d">基金</text><text x="1704" y="746" class="d" style="font-size:8px">①</text><text x="1722" y="753" class="v">182家</text><text x="1785" y="753" class="v">4950万股</text><text x="1892" y="753" class="e v">4.0%</text>
<text x="1675" y="778" class="d">分红</text><text x="1713" y="778" class="v">3.97亿(15)</text><text x="1783" y="778" class="d">募资</text><text x="1890" y="778" class="e v">14.69亿(8)</text>
<text x="1675" y="806" class="d">融资占比</text><text x="1782" y="806" class="e v">6.54%</text><text x="1783" y="806" class="d">融券占比</text><text x="1890" y="806" class="e v">0.07%</text>
<text x="1675" y="833" class="d">日期</text><text x="1810" y="833" class="e d">融资余额</text><text x="1892" y="833" class="e d">融券余量</text>
<text x="1675" y="853" class="n">04-10</text><text x="1810" y="853" class="e n">7.87亿↓</text><text x="1892" y="853" class="e n">82.69万↓</text>
<text x="1675" y="874" class="v">04-09</text><text x="1810" y="874" class="e v">8.34亿↓</text><text x="1892" y="874" class="e v">142万↑</text>
<text x="1675" y="895" class="v">04-08</text><text x="1810" y="895" class="e v">8.51亿↓</text><text x="1892" y="895" class="e v">126万↓</text>
<text x="1675" y="923" class="d">日期</text><text x="1723" y="923" class="d">异动类型</text>
<text x="1675" y="943" class="v">04-01</text><text x="1723" y="943" class="v">跌幅偏离值达7%的证券</text>
<text x="1675" y="972" class="d">日期</text><text x="1722" y="972" class="d">大宗交易成交价</text><text x="1892" y="972" class="e d">成交额</text>
<text x="1675" y="991" class="v">03-07</text><text x="1819" y="991" class="e v">6.55</text><text x="1890" y="991" class="e v">3648万</text>
</g>
<!-- sentiment bar -->
<path d="M1684 706H1835l-3 18H1684a9 9 0 0 1 0-18z" fill="#dc2344"/>
<path d="M1840 706H1883a9 9 0 0 1 0 18H1837z" fill="#4cae38"/>
<circle cx="1684" cy="715" r="8" fill="#fff"/><circle cx="1883" cy="715" r="8" fill="#fff"/>
<path d="M1680 715h2v5h-2zM1683 720v-5l2-4 1 1-1 2h3v6z" fill="#dc2344"/><path d="M1879 710h6v5l-2 4-1-1 1-2h-4zM1886 710h2v5h-2z" fill="#4cae38"/>
<text x="1696" y="720" class="w f14">84%</text><text x="1847" y="720" class="w f14">16%</text>

<!-- status bar -->
<rect x="0" y="1019" width="1920" height="23" fill="#f0f0f0"/>
<rect x="0" y="1040" width="1920" height="2" fill="#555"/>
<g><text x="0" y="1034" class="k">上证</text><text x="26" y="1034" class="r">3039.59</text><text x="86" y="1034" class="r">12.25</text><text x="126" y="1034" class="r">0.40%</text><text x="172" y="1034" class="k">1394亿</text><text x="219" y="1034" class="k">深证</text><text x="246" y="1034" class="r">9329.34</text><text x="306" y="1034" class="r">31.38</text><text x="346" y="1034" class="r">0.34%</text><text x="392" y="1034" class="k">1902亿</text><text x="440" y="1034" class="k">创业</text><text x="467" y="1034" class="r">1793.20</text><text x="530" y="1034" class="r">3.26</text><text x="566" y="1034" class="r">0.18%</text><text x="612" y="1034" class="k">791.6亿</text><text x="668" y="1034" class="k">总成交</text><text x="718" y="1034" class="k">3318亿</text><text x="812" y="1034" class="k">已连接</text></g>
<rect x="774" y="1022" width="15" height="16" fill="#222"/><circle cx="781.500" cy="1030" r="4" fill="none" stroke="#e0a020"/><rect x="793" y="1022" width="15" height="16" fill="#0a8a3a"/><text x="800.500" y="1034" class="m w">2</text>

<!-- sogou bar -->
<rect x="1484.500" y="1017.500" width="159" height="22" fill="#fff" stroke="#cfe0f0"/>
<rect x="1463" y="1017" width="21" height="21" rx="3" fill="#f05a1a" transform="rotate(-12 1473 1027)"/><text x="1473" y="1035" class="m w bd" style="font-size:20px">S</text>
<text x="1501" y="1035" class="m bd f16" style="fill:#1a7ad0">中</text>
<path d="M1528 1020a8 8 0 1 1-9 12 8 8 0 0 0 9-12z" fill="#1a7ad0"/>
<circle cx="1541" cy="1026" r="1.500" fill="#1a7ad0"/><path d="M1549 1028a2 2 0 1 1 1 3l-2 3" fill="#1a7ad0" stroke="#1a7ad0"/>
<rect x="1560" y="1022" width="15" height="11" rx="1" fill="none" stroke="#1a7ad0" stroke-width="2"/><path d="M1563 1026h9M1563 1029h9" stroke="#1a7ad0" stroke-dasharray="1 1"/>
<circle cx="1589" cy="1024" r="3.500" fill="#1a7ad0"/><path d="M1582 1036a7 7 0 0 1 14 0z" fill="#1a7ad0"/>
<path d="M1605 1023l4-2 2 1 2-1 4 2 1 4-3 1v7h-8v-7l-3-1z" fill="#1a7ad0"/>
<path d="M1628 1037l8-9a4 4 0 0 1 5-6l-3 3 2 2 3-3a4 4 0 0 1-6 5l-8 9z" fill="#1a7ad0"/>
<!-- tray -->
<circle cx="1670" cy="1029" r="6" fill="none" stroke="#c02020" stroke-width="2" stroke-dasharray="7 2"/>
<rect x="1693" y="1021" width="16" height="16" fill="#111"/><path d="M1696 1026h3l5-3v12l-5-3h-3z" fill="#999"/>
<rect x="1723" y="1021" width="16" height="16" fill="#111"/><rect x="1724" y="1024" width="14" height="10" rx="1" fill="#e87020"/>
<rect x="1753" y="1021" width="16" height="16" fill="#111"/><rect x="1755" y="1024" width="12" height="8" fill="none" stroke="#20a0e0"/><path d="M1758 1034h6" stroke="#20a0e0"/>
<rect x="1783" y="1021" width="16" height="16" fill="#111"/><path d="M1786 1024l9 9-7 1z" fill="#c02030"/>
<rect x="1813" y="1021" width="16" height="16" fill="#111"/><path d="M1823 1022l-6 9h4l-2 5 6-8h-4l3-6z" fill="#f0e020"/>
<text x="1844" y="1034" class="k f13">10:25:18</text>

<!-- right toolbar -->
<rect x="1895" y="23" width="25" height="996" fill="#f0f0f0"/>
<g fill="none" stroke="#1a6fd0" stroke-width="1">
<path d="M1900 34l7-5v3h7v5h-7v3z"/><path d="M1907 51l6 6h-3v7h-6v-7h-3z"/><path d="M1904 72h6v7h3l-6 6-6-6h3z"/>
<rect x="1900.500" y="97.500" width="13" height="12"/><rect x="1900.500" y="119.500" width="13" height="12"/><rect x="1900.500" y="142.500" width="13" height="12"/><rect x="1900.500" y="165.500" width="13" height="12"/><rect x="1900.500" y="191.500" width="11" height="9"/><path d="M1903 191v-3h11v9h-2"/><rect x="1900.500" y="213.500" width="13" height="12"/><rect x="1900.500" y="236.500" width="13" height="11"/><rect x="1900.500" y="259.500" width="13" height="12"/><rect x="1900.500" y="281.500" width="13" height="12"/><rect x="1900.500" y="304.500" width="13" height="12" rx="3"/><rect x="1900.500" y="327.500" width="13" height="10"/><circle cx="1907" cy="332" r="3"/>
<rect x="1900.500" y="358.500" width="13" height="11"/><path d="M1902 363l2-2 3 2 2-2 3 2M1902 366l2-2 3 2 2-2 3 2" stroke="#d02030"/>
<rect x="1900.500" y="482.500" width="13" height="11"/><rect x="1900.500" y="504.500" width="13" height="11"/>
</g>
<path d="M1903 100h8v1h-8zM1903 103h5v1h-5zM1903 106h5v1h-5z" fill="#d02030"/><path d="M1902 122h10v2h-10zM1902 125h10v2h-10zM1902 128h10v2h-10z" fill="#d02030"/><path d="M1902 151l4-3 3 2 4-4" stroke="#d02030" fill="none"/><path d="M1903 168h2v7h-2zM1909 167h2v8h-2z" fill="#d02030"/><path d="M1906 170h2v6h-2z" fill="#0a8a3a"/>
<path d="M1903 193h6M1903 195.500h6M1903 198h6" stroke="#555"/>
<text x="1907" y="224" class="m" style="font-size:9px;fill:#1a6fd0;font-weight:700">FIO</text><rect x="1903" y="238" width="4" height="3" fill="#e0a020"/><rect x="1908" y="241" width="4" height="3" fill="#e0a020"/><rect x="1902" y="261" width="10" height="9" fill="#f08030"/><text x="1907" y="291" class="m" style="font-size:9px;fill:#1a6fd0;font-weight:700">FIZ</text><text x="1907" y="314" class="m" style="font-size:9px;fill:#0a6a50;font-weight:700">f(x)</text><path d="M1899 348.500H1915M1899 471.500H1915" stroke="#aaa"/>
<text x="1907" y="390" class="m bd" style="font-size:10px;fill:#2040c0">RSI</text>
<path d="M1903 404h8v3h-8zM1902 408h10v3h-10zM1903 412h9v3h-9z" fill="#c03030"/>
<path d="M1907 426l3 3h-6zM1907 440l3-3h-6zM1900 433l3-3v6zM1914 433l-3-3v6zM1905 431h4v4h-4z" fill="#1a4fb0"/>
<path d="M1902 462l8-10 3 2-8 10-3 1z" fill="#e0a030" stroke="#a06020"/>
<text x="1907" y="492" class="m" style="font-size:9px;fill:#1a6fd0;font-weight:700">FS</text><path d="M1902 510a5 4 0 0 1 10-1M1912 511a5 4 0 0 1-10 1" stroke="#40a040" stroke-width="2" fill="none"/>
<g><text x="1907" y="537" class="m" style="fill:#1a4fb0">1</text><text x="1907" y="561" class="m" style="fill:#1a4fb0">5</text><text x="1907" y="584" class="m" style="fill:#1a4fb0">15</text><text x="1907" y="607" class="m" style="fill:#1a4fb0">30</text><text x="1907" y="630" class="m" style="fill:#1a4fb0">60</text></g>
<rect x="1897.500" y="637.500" width="22" height="22" fill="#fff" stroke="#bbb"/><text x="1908" y="653" class="m f13" style="fill:#1a4fb0">日</text><text x="1907" y="676" class="m f13" style="fill:#1a4fb0">周</text><text x="1907" y="699" class="m f13" style="fill:#1a4fb0">月</text><text x="1907" y="722" class="m" style="fill:#1a4fb0">N</text><text x="1907" y="745" class="m f13" style="fill:#1a4fb0">多</text><text x="1907" y="768" class="m f13" style="fill:#1a4fb0">季</text><text x="1907" y="792" class="m f13" style="fill:#1a4fb0">年</text>
</svg>
</body></html>
